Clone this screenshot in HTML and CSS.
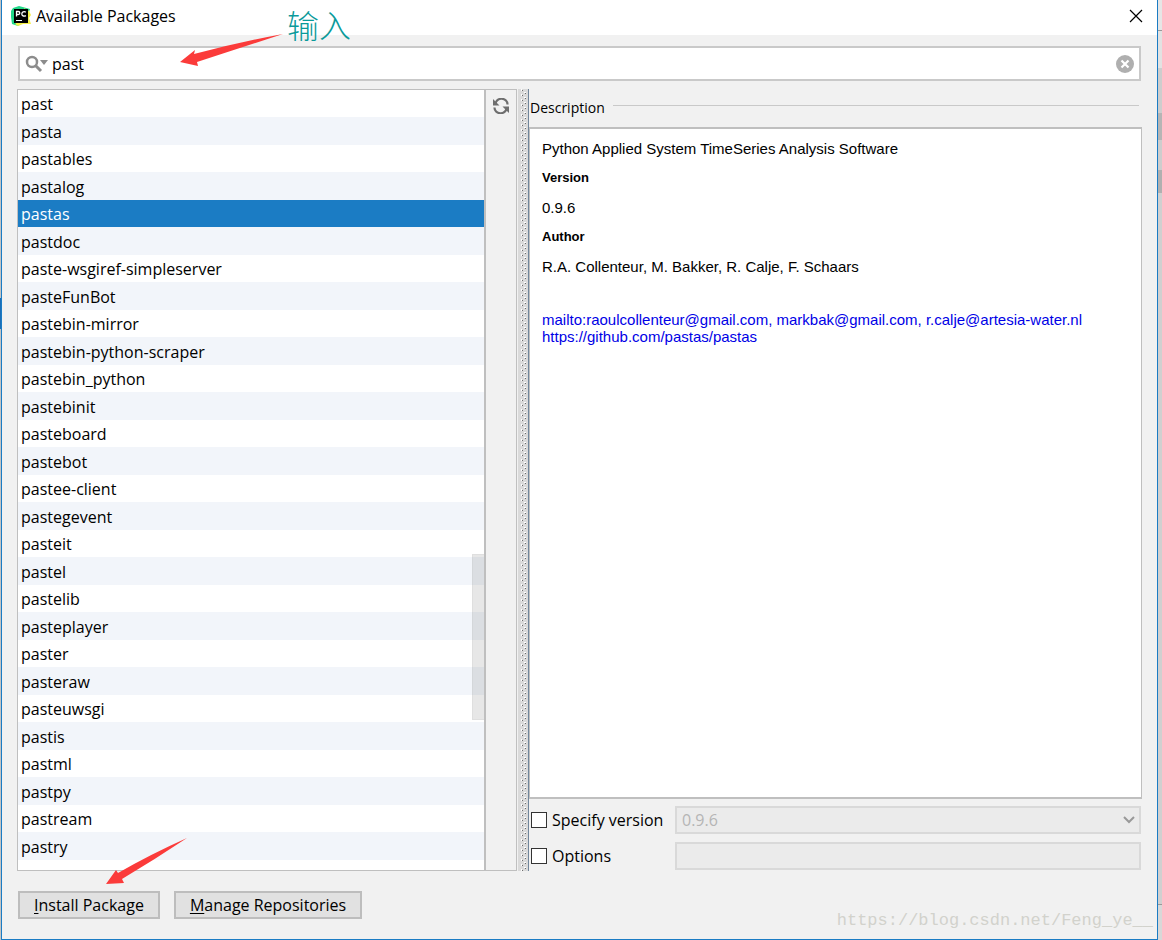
FILE: index.html
```html
<!DOCTYPE html>
<html lang="en">
<head>
<meta charset="utf-8">
<meta name="viewport" content="width=device-width, initial-scale=1">
<title>Available Packages</title>
<link rel="stylesheet" href="styles.css">
</head>
<body class="desktop">
<main class="dialog">
  <header class="titlebar">
    <svg class="app-icon" viewBox="0 0 20 20" aria-hidden="true">
      <path d="M2 2L8 0L19 3L17 9L19 18L12 17L7 20L1 18L0 11L0 5Z" fill="#21d789"/>
      <path d="M13 2L18 5L20 9L18 12L20 18L12 18L7 20L4 18L15 9Z" fill="#f5f04a"/>
      <rect x="3" y="3" width="14" height="14" fill="#000"/>
      <path d="M5.500 10.500V5.500h1.800a1.500 1.500 0 0 1 0 3H5.500M14.800 6.300a2.300 2.300 0 1 0 0 3.200" fill="none" stroke="#fff" stroke-width="1.300"/>
      <rect x="5" y="14" width="6" height="1" fill="#fff"/>
    </svg>
    <h1 class="title">Available Packages</h1>
    <button class="close" type="button" aria-label="Close">
      <svg viewBox="0 0 14 14" aria-hidden="true"><path d="M1 1L13 13M13 1L1 13" stroke="#000" stroke-width="1.200"/></svg>
    </button>
  </header>

  <div class="content">
    <div class="search">
      <svg class="search-icon" viewBox="0 0 24 18" aria-hidden="true">
        <circle cx="7" cy="7" r="5" fill="none" stroke="#8c8c8c" stroke-width="2.500"/>
        <path d="M10.500 10.500L16 16" stroke="#8c8c8c" stroke-width="3"/>
        <path d="M15 5h8l-4 5z" fill="#8c8c8c"/>
      </svg>
      <input class="search-input" type="text" value="past" aria-label="Search packages">
      <button class="clear" type="button" aria-label="Clear">
        <svg viewBox="0 0 18 18" aria-hidden="true"><circle cx="9" cy="9" r="9" fill="#afafaf"/><path d="M5.500 5.500L12.500 12.500M12.500 5.500L5.500 12.500" stroke="#fff" stroke-width="2.200"/></svg>
      </button>
    </div>

    <div class="panes">
      <div class="list-pane">
        <ul class="packages">
          <li>past</li><li>pasta</li><li>pastables</li><li>pastalog</li><li class="selected">pastas</li><li>pastdoc</li><li>paste-wsgiref-simpleserver</li><li>pasteFunBot</li><li>pastebin-mirror</li><li>pastebin-python-scraper</li><li>pastebin_python</li><li>pastebinit</li><li>pasteboard</li><li>pastebot</li><li>pastee-client</li><li>pastegevent</li><li>pasteit</li><li>pastel</li><li>pastelib</li><li>pasteplayer</li><li>paster</li><li>pasteraw</li><li>pasteuwsgi</li><li>pastis</li><li>pastml</li><li>pastpy</li><li>pastream</li><li>pastry</li>
        </ul>
        <span class="scroll-thumb"></span>
      </div>
      <div class="toolbar">
        <button class="reload" type="button" aria-label="Reload package list">
          <svg viewBox="0 0 16 16" aria-hidden="true">
            <path d="M2.500 6A6 5.500 0 0 1 14.500 6.500M13.500 10A6 5.500 0 0 1 1.500 9.500" fill="none" stroke="#6e6e6e" stroke-width="2.200"/>
            <path d="M0 1V7.500H6.500ZM16 15V8.500H9.500Z" fill="#6e6e6e"/>
          </svg>
        </button>
      </div>
      <div class="splitter">
        <svg class="grip" aria-hidden="true">
          <defs><pattern id="dots" width="6" height="5" patternUnits="userSpaceOnUse">
            <path d="M0 0h1v2h-1zM3 3h2v1h-2z" fill="#fff"/><path d="M1 1h1v1h-1zM4 4h1v1h-1z" fill="#6c6c6c"/>
          </pattern></defs>
          <rect width="100%" height="100%" fill="url(#dots)"/>
        </svg>
      </div>
      <section class="details">
        <h2 class="details-title">Description</h2>
        <div class="description">
          <p>Python Applied System TimeSeries Analysis Software</p>
          <h3>Version</h3>
          <p>0.9.6</p>
          <h3>Author</h3>
          <p>R.A. Collenteur, M. Bakker, R. Calje, F. Schaars</p>
          <div class="links">
            <a href="mailto:raoulcollenteur@gmail.com">mailto:raoulcollenteur@gmail.com, markbak@gmail.com, r.calje@artesia-water.nl</a>
            <a href="https://github.com/pastas/pastas">https://github.com/pastas/pastas</a>
          </div>
        </div>
        <div class="options">
          <label class="check"><input type="checkbox">Specify version</label>
          <div class="combo">
            <select class="field" disabled aria-label="Version"><option>0.9.6</option></select>
            <svg class="chevron" viewBox="0 0 12 8" aria-hidden="true"><path d="M1 1L6 6L11 1" fill="none" stroke="#999" stroke-width="2"/></svg>
          </div>
          <label class="check"><input type="checkbox">Options</label>
          <input class="field" type="text" disabled aria-label="Options value">
        </div>
      </section>
    </div>

    <footer class="actions">
      <button class="btn" type="button"><u>I</u>nstall Package</button>
      <button class="btn" type="button"><u>M</u>anage Repositories</button>
    </footer>
  </div>

  <span class="note" lang="zh">输入</span>
  <svg class="arrow arrow-search" viewBox="0 0 104 34" aria-hidden="true"><path d="M0 28L15 16L14 20Q60 8 103 0Q60 14 17 28L18 32Z" fill="#fb3b3a"/></svg>
  <svg class="arrow arrow-install" viewBox="0 0 82 48" aria-hidden="true"><path d="M0 46L10 32L12 35Q45 16 81 0Q48 22 16 41L18 45Z" fill="#fb3b3a"/></svg>
  <span class="watermark">https://blog.csdn.net/Feng_ye__</span>
</main>
</body>
</html>
```
FILE: styles.css
```css
* { box-sizing: border-box; }

.desktop {
  margin: 0;
  padding: 0 4px 0 1px;
  min-height: 100vh;
  display: flex;
  background:
    linear-gradient(#c4c4c4 0 298px, #1b6fb8 298px 329px, #c4c4c4 329px) left / 1px 100% no-repeat,
    linear-gradient(#e6e6e6 0 30px, #999 30px 31px, #e2e2e2 31px 68px, #cdcdcd 68px 113px, #b5b5b5 113px 140px, #cdcdcd 140px 170px, #b0b0b0 170px 193px, #d0d0d0 193px 904px, #999 904px 905px, #d8d8d8 905px);
  color: #000;
  font: 16px/24px "Open Sans", "Noto Sans", sans-serif;
}

.dialog {
  position: relative;
  flex: 1;
  min-width: 0;
  display: flex;
  flex-direction: column;
  border: 1px solid #1b7cc4;
  border-top: 0;
  background: #f1f1f1;
}

.titlebar {
  display: flex;
  align-items: center;
  height: 35px;
  padding: 0 14px 3px 9px;
  background: #fff;
}
.app-icon { width: 20px; height: 20px; }
.title { flex: 1; margin: 0 0 0 5px; font-size: 16px; font-weight: 400; }

button { font: inherit; color: inherit; cursor: default; }
.close, .clear, .reload { display: flex; padding: 0; border: 0; background: none; }
.close svg { width: 14px; height: 14px; }

.content {
  flex: 1;
  display: flex;
  flex-direction: column;
  padding: 11px 15px 20px;
}

.search {
  display: flex;
  align-items: center;
  height: 35px;
  margin: 0 1px 8px;
  padding: 0 5px;
  border: 2px solid #c9c9c9;
  background: #fff;
}
.search-icon { width: 24px; height: 18px; }
.search-input {
  flex: 1;
  min-width: 0;
  padding: 0 0 0 3px;
  border: 0;
  outline: 0;
  background: none;
  color: #000;
  font: inherit;
}
.clear svg { width: 18px; height: 18px; }

.panes {
  flex: 1;
  display: grid;
  grid-template-columns: minmax(0, 467fr) 34px 11px minmax(0, 613fr);
  margin-bottom: 20px;
}

.list-pane {
  position: relative;
  padding-bottom: 10px;
  border: 1px solid #bfbfbf;
  border-right: 0;
  background: #fff;
}
.packages { margin: 0; padding: 0; list-style: none; }
.packages li { height: 27px; padding-left: 3px; line-height: 28px; white-space: nowrap; overflow: hidden; }
.packages li:nth-child(even) { height: 28px; line-height: 30px; background: #f2f5fa; }
.packages .selected { background: #1b7cc4; color: #fff; }
.scroll-thumb {
  position: absolute;
  right: 0;
  top: 464px;
  width: 12px;
  height: 166px;
  border: 1px solid #00000008;
  border-right: 0;
  background: #00000018;
}

.toolbar {
  margin-right: 1px;
  padding: 7px;
  border: 1px solid #bfbfbf;
  border-left-width: 2px;
}
.reload svg { width: 16px; height: 16px; margin-top: 1px; }

.splitter { display: flex; background: #dadada; border-right: 1px solid #71869b; padding-left: 3px; }
.grip { width: 6px; height: 100%; }

.details { display: flex; flex-direction: column; min-width: 0; }
.details-title {
  display: flex;
  align-items: center;
  gap: 8px;
  height: 38px;
  margin: 0;
  padding: 0 3px 0 1px;
  font-size: 14px;
  font-weight: 400;
}
.details-title::after { content: ""; flex: 1; height: 1px; margin-bottom: 5px; background: #c9c9c9; }

.description {
  flex: 1;
  padding: 11px 12px;
  border: 1px solid #bfbfbf;
  border-width: 2px 1px;
  background: #fff;
  font: 15px/17px "Liberation Sans", Arial, sans-serif;
}
.description p { margin: 0 0 12px; }
.description h3 { margin: 0 0 12px; font-size: 13px; line-height: 18px; }
.links { margin-top: 36px; }
.links a { display: block; color: #0000e6; text-decoration: none; }

.options {
  display: grid;
  grid-template-columns: 145px minmax(0, 1fr);
  gap: 8px 0;
  padding: 7px 1px 1px;
}
.check { display: flex; align-items: center; gap: 5px; padding-left: 1px; }
.check input {
  appearance: none;
  width: 16px;
  height: 16px;
  margin: 0;
  border: 1px solid #333;
  background: #fff;
}
.combo { position: relative; display: flex; }
.field {
  appearance: none;
  width: 100%;
  height: 28px;
  padding: 0 5px;
  border: 2px solid #d9d9d9;
  border-radius: 0;
  background: #ebebeb;
  color: #b5b5b5;
  font: inherit;
  opacity: 1;
}
.chevron { position: absolute; right: 6px; top: 10px; width: 12px; height: 8px; }

.actions { display: flex; gap: 14px; padding-left: 1px; }
.btn { height: 28px; padding: 0 14px; border: 2px solid #bdbdbd; background: #e1e1e1; line-height: 22px; white-space: nowrap; }
.btn u { text-underline-offset: 2px; }

.note { position: absolute; left: 285px; top: 4px; color: #0a9a9a; font: 32px/40px "Noto Sans CJK SC", sans-serif; font-weight: 300; }
.arrow { position: absolute; pointer-events: none; }
.arrow-search { left: 178px; top: 34px; width: 104px; height: 34px; }
.arrow-install { left: 104px; bottom: 53px; width: 82px; height: 48px; }
.watermark { position: absolute; right: 4px; bottom: 7px; color: #d2d2cc; font: 17px/22px "Liberation Mono", monospace; }
```
